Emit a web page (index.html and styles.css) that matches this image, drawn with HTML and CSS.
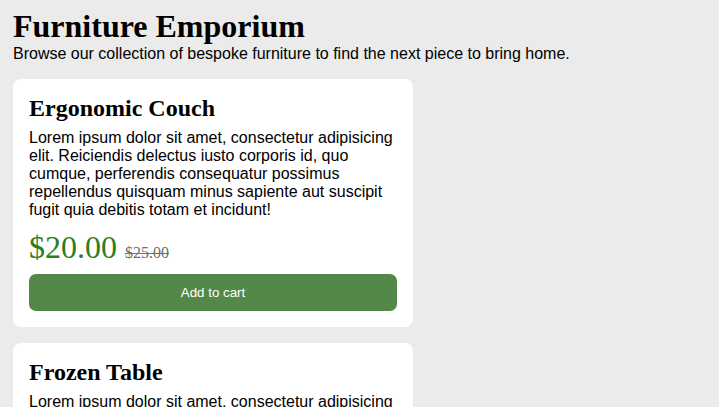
FILE: index.html
```html
<!DOCTYPE html>
<html lang="en">
<head>
<meta charset="utf-8">
<title>Furniture Emporium</title>
<link rel="stylesheet" href="styles.css">
</head>
<body>
  <header class="header">
    <h1 class="title">Furniture Emporium</h1>
    <p class="intro">Browse our collection of bespoke furniture to find the next piece to bring home.</p>
  </header>
  <main class="cards">
    <div class="card">
      <h2 class="card-title">Ergonomic Couch</h2>
      <p class="card-text">Lorem ipsum dolor sit amet, consectetur adipisicing elit. Reiciendis delectus iusto corporis id, quo cumque, perferendis consequatur possimus repellendus quisquam minus sapiente aut suscipit fugit quia debitis totam et incidunt!</p>
      <p class="price"><span class="price-now">$20.00</span> <span class="price-old">$25.00</span></p>
      <button class="btn">Add to cart</button>
    </div>
    <div class="card">
      <h2 class="card-title">Frozen Table</h2>
      <p class="card-text">Lorem ipsum dolor sit amet, consectetur adipisicing elit. Reiciendis delectus iusto corporis id, quo cumque, perferendis consequatur possimus repellendus quisquam minus sapiente aut suscipit fugit quia debitis totam et incidunt!</p>
      <p class="price"><span class="price-now">$30.00</span> <span class="price-old">$35.00</span></p>
      <button class="btn">Add to cart</button>
    </div>
  </main>
</body>
</html>
```
FILE: styles.css
```css
html, body {
  margin: 0;
  background: #ebebeb;
}
body {
  padding: 8px 13px;
  font-family: "Liberation Serif", "Times New Roman", serif;
  color: #000;
}
.title {
  margin: 0;
  font-size: 32px;
  font-weight: bold;
  line-height: normal;
}
.intro {
  margin: 0;
  font-family: "Liberation Sans", Arial, sans-serif;
  font-size: 16px;
}
.cards {
  display: flex;
  flex-direction: column;
  gap: 16px;
  margin-top: 16px;
}
.card {
  width: 400px;
  box-sizing: border-box;
  background: #fff;
  border-radius: 8px;
  padding: 16px;
}
.card-title {
  margin: 0 0 7px;
  font-size: 24px;
  font-weight: bold;
  line-height: normal;
}
.card-text {
  margin: 0;
  font-family: "Liberation Sans", Arial, sans-serif;
  font-size: 16px;
  line-height: normal;
}
.price {
  margin: 10px 0 0;
  font-size: 32px;
  line-height: normal;
}
.price-now {
  color: #2e7d1e;
}
.price-old {
  font-size: 16px;
  color: #6e6e6e;
  text-decoration: line-through;
}
.btn {
  display: block;
  width: 100%;
  height: 37px;
  margin-top: 8px;
  border: none;
  border-radius: 7px;
  background: #548848;
  color: #fff;
  font-family: "Liberation Sans", Arial, sans-serif;
  font-size: 13.333px;
}
```
